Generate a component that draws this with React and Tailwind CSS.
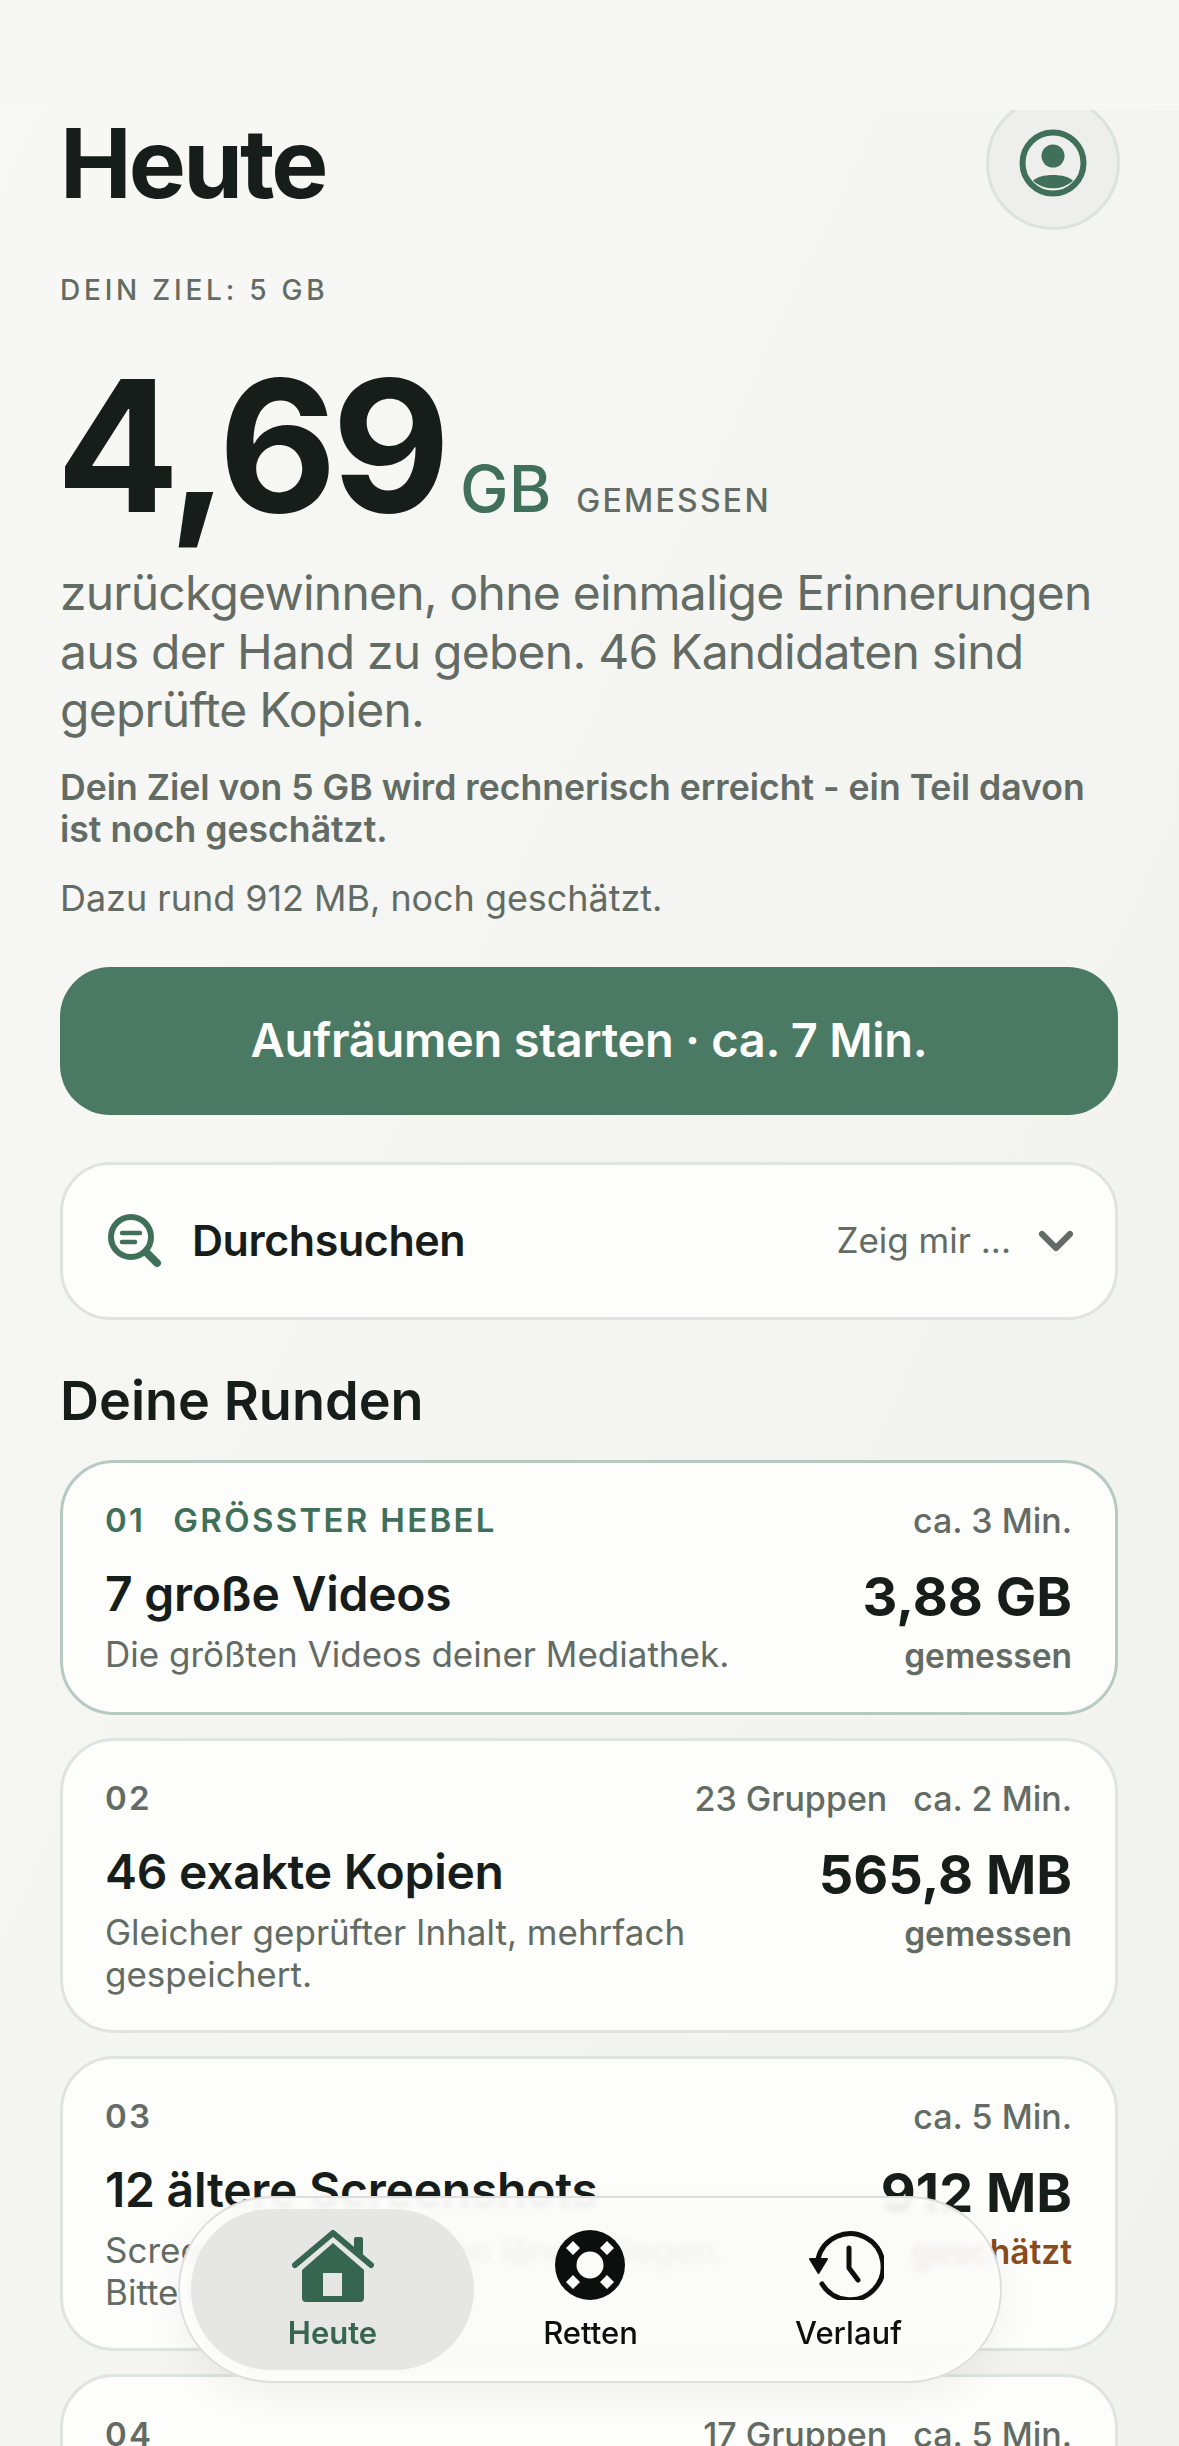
import React from "react";
import { ChevronDown } from "lucide-react";

const font = "font-['Inter','Liberation_Sans',sans-serif]";

const rounds = [
  {
    nr: "01",
    tag: "GRÖSSTER HEBEL",
    time: "ca. 3 Min.",
    title: "7 große Videos",
    text: "Die größten Videos deiner Mediathek.",
    size: "3,88 GB",
    note: "gemessen",
    first: true,
  },
  {
    nr: "02",
    groups: "23 Gruppen",
    time: "ca. 2 Min.",
    title: "46 exakte Kopien",
    text: "Gleicher geprüfter Inhalt, mehrfach gespeichert.",
    size: "565,8 MB",
    note: "gemessen",
  },
  {
    nr: "03",
    time: "ca. 5 Min.",
    title: "12 ältere Screenshots",
    text: "Screenshots, die schon länger liegen. Bitte kurz prüfen.",
    size: "912 MB",
    note: "geschätzt",
    estimated: true,
  },
  {
    nr: "04",
    groups: "17 Gruppen",
    time: "ca. 5 Min.",
    title: "31 ähnliche Fotos",
    text: "Fast gleiche Aufnahmen.",
    size: "204 MB",
    note: "gemessen",
  },
];

const Round = ({ round }) => (
  <div
    className={`rounded-[54px] border-[3px] bg-[#fdfdfb] pl-[42px] pr-[43px] pt-[36px] pb-[35px] ${
      round.first ? "border-[#b6cabf]" : "border-[#dfe4df]"
    }`}
  >
    <div className="flex items-center justify-between h-[44px] text-[33px] text-[#626b64]">
      <div className="flex items-center gap-[28px] font-semibold tracking-[0.07em]">
        <span className={round.first ? "text-[#40705a]" : ""}>{round.nr}</span>
        {round.tag && <span className="text-[#40705a]">{round.tag}</span>}
      </div>
      <div className="flex gap-[26px] font-medium text-[34px]">
        {round.groups && <span>{round.groups}</span>}
        <span>{round.time}</span>
      </div>
    </div>
    <div className="flex justify-between mt-[22px]">
      <div className="w-[640px]">
        <div className="text-[48px] leading-[58px] font-semibold tracking-[-0.005em] text-[#171d1a] whitespace-nowrap">{round.title}</div>
        <div className="text-[35px] leading-[42px] text-[#626b64] mt-[10px]">{round.text}</div>
      </div>
      <div className="text-right mt-[1px]">
        <div className="text-[54px] leading-[62px] font-bold text-[#171d1a]">{round.size}</div>
        <div
          className={`text-[33.5px] leading-[42px] font-semibold mt-[7px] ${
            round.estimated ? "text-[#8a4a1c]" : "text-[#626b64]"
          }`}
        >
          {round.note}
        </div>
      </div>
    </div>
  </div>
);

const HomeIcon = () => (
  <svg width="82" height="74" viewBox="0 0 82 74" fill="none">
    <path d="M41 13 L72 40 V68 a4 4 0 0 1 -4 4 H14 a4 4 0 0 1 -4 -4 V40 Z M31 43 V66 H50 V43 Z" fill="#366650" fillRule="evenodd" />
    <rect x="62" y="7" width="9" height="18" rx="2" fill="#366650" />
    <path d="M3 35 L41 3 L79 35" stroke="#366650" strokeWidth="6" strokeLinecap="round" strokeLinejoin="round" />
  </svg>
);

const RingIcon = () => (
  <svg width="70" height="70" viewBox="0 0 70 70" className="-ml-[2px]">
    <circle cx="35" cy="35" r="35" fill="#0d0e0e" />
    <circle cx="35" cy="35" r="13.5" fill="#fbfbfa" />
    <path d="M18 11 L25 18 L18 25 L11 18 Z M52 11 L59 18 L52 25 L45 18 Z M18 45 L25 52 L18 59 L11 52 Z M52 45 L59 52 L52 59 L45 52 Z" fill="#fbfbfa" />
  </svg>
);

const HistoryIcon = () => (
  <svg width="76" height="70" viewBox="0 0 76 70" fill="none" className="-ml-[5px]">
    <path d="M10 29 A33 33 0 1 1 14 54" stroke="#0d0e0e" strokeWidth="5" strokeLinecap="round" />
    <path d="M2 29 H19 L10.5 43 Z" fill="#0d0e0e" stroke="#0d0e0e" strokeWidth="2" strokeLinejoin="round" />
    <path d="M41 18 V38 L50 50" stroke="#0d0e0e" strokeWidth="5" strokeLinecap="round" strokeLinejoin="round" />
  </svg>
);

export default function App() {
  return (
    <div className={`relative h-[2446px] w-[1179px] overflow-hidden bg-gradient-to-br from-[#f8f8f6] to-[#f1f2ee] ${font}`}>
      <div className="absolute left-0 right-0 top-0 h-[110px] bg-[#f7f7f5] z-10" />

      <div className="pl-[60px] pr-[61px] pt-[96px]">
        <div className="flex items-start justify-between">
          <h1 className="text-[96px] leading-[134px] font-bold tracking-[-0.03em] text-[#171d1a]">Heute</h1>
          <div className="-mr-[2px] flex h-[134px] w-[134px] items-center justify-center rounded-full border-[3px] border-[#dce3de] bg-[#eeeeec]">
            <svg width="68" height="68" viewBox="0 0 68 68">
              <circle cx="34" cy="34" r="30.5" fill="none" stroke="#40705a" strokeWidth="6" />
              <circle cx="34" cy="27" r="11.5" fill="#40705a" />
              <path d="M14 52 C20 44 48 44 54 52 A31 31 0 0 1 14 52 Z" fill="#40705a" />
            </svg>
          </div>
        </div>

        <div className="mt-[42px] text-[28px] leading-[36px] font-medium tracking-[0.135em] text-[#626b64]">DEIN ZIEL: 5 GB</div>

        <div className="mt-[38px] -ml-[4px] flex items-baseline">
          <span className="text-[183px] leading-[200px] font-bold tracking-[-0.03em] text-[#171d1a]">4,69</span>
          <span className="ml-[15px] text-[65px] font-medium text-[#40705a]">GB</span>
          <span className="ml-[25px] text-[32px] font-medium tracking-[0.07em] text-[#626b64]">GEMESSEN</span>
        </div>

        <p className="mt-[18px] text-[48px] leading-[58.5px] tracking-[-0.016em] text-[#626b64]">
          zurückgewinnen, ohne einmalige Erinnerungen aus der Hand zu geben. 46 Kandidaten sind geprüfte Kopien.
        </p>
        <p className="mt-[27px] text-[35.6px] leading-[42px] font-semibold text-[#626b64]">
          Dein Ziel von 5 GB wird rechnerisch erreicht - ein Teil davon ist noch geschätzt.
        </p>
        <p className="mt-[26px] text-[35.9px] leading-[42px] text-[#626b64]">Dazu rund 912 MB, noch geschätzt.</p>

        <button className="mt-[48px] flex h-[148px] w-full items-center justify-center rounded-[50px] bg-[#4a7a64] text-[47px] font-semibold tracking-[-0.006em] text-[#fdfdfb]">
          Aufräumen starten · ca. 7 Min.
        </button>

        <div className="mt-[47px] flex h-[158px] items-center rounded-[50px] border-[3px] border-[#dfe4df] bg-[#fdfdfb] pl-[44px] pr-[31px]">
          <svg width="56" height="56" viewBox="0 0 56 56" fill="none">
            <circle cx="24" cy="24" r="20" stroke="#40705a" strokeWidth="6" />
            <path d="M39 39 L50 50" stroke="#40705a" strokeWidth="8" strokeLinecap="round" />
            <path d="M15 20 H33 M15 29 H28" stroke="#40705a" strokeWidth="4.5" strokeLinecap="round" />
          </svg>
          <span className="ml-[29px] text-[43px] font-semibold tracking-[-0.01em] text-[#171d1a]">Durchsuchen</span>
          <span className="ml-auto text-[35px] text-[#626b64]">Zeig mir ...</span>
          <ChevronDown className="ml-[17px] h-[56px] w-[56px] text-[#626b64]" strokeWidth={2.6} />
        </div>

        <h2 className="mt-[48px] text-[54px] leading-[66px] font-semibold text-[#171d1a]">Deine Runden</h2>

        <div className="mt-[26px] flex flex-col gap-[23px]">
          {rounds.map((round) => (
            <Round key={round.nr} round={round} />
          ))}
        </div>
      </div>

      <div className="absolute left-[178px] top-[2196px] z-20 flex h-[187px] w-[824px] items-center rounded-[94px] border-2 border-[#dedfdd] bg-[#fbfbfa]/92 pl-[11px] shadow-[0_14px_40px_rgba(0,0,0,0.05),inset_0_0_14px_rgba(255,255,255,0.9)] backdrop-blur-[3px]">
        <div className="flex h-[161px] w-[283px] flex-col items-center justify-center rounded-[80px] bg-[#e6e7e5]">
          <HomeIcon />
          <span className="mt-[12px] text-[31px] leading-[34px] font-semibold text-[#366650]">Heute</span>
        </div>
        <div className="flex w-[233px] flex-col items-center">
          <RingIcon />
          <span className="mt-[16px] text-[31px] leading-[34px] font-medium text-[#0d0e0e]">Retten</span>
        </div>
        <div className="flex w-[283px] flex-col items-center">
          <HistoryIcon />
          <span className="mt-[16px] text-[31px] leading-[34px] font-medium text-[#0d0e0e]">Verlauf</span>
        </div>
      </div>
    </div>
  );
}
